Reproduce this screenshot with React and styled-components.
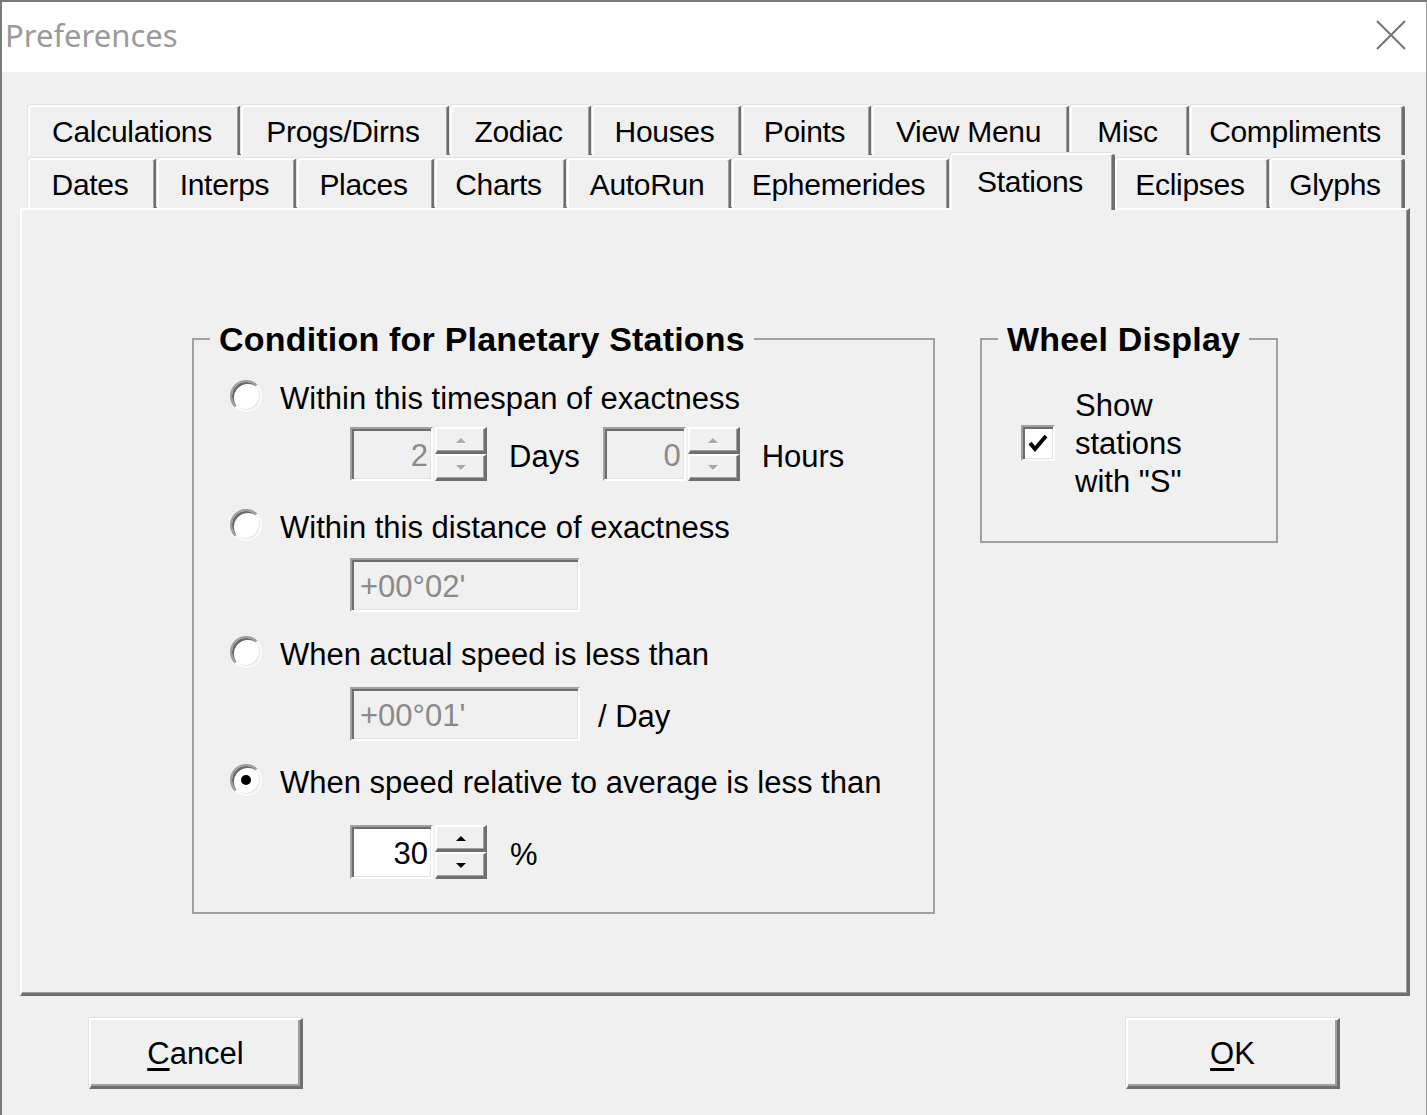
import React from "react"
import styled, { createGlobalStyle } from "styled-components"

const GlobalStyle = createGlobalStyle`
  html, body {
    margin: 0;
    padding: 0;
    background: #f0f0f0;
  }
  body {
    font-family: "Liberation Sans", Arial, sans-serif;
    color: #000;
  }
`

const Window = styled.div`
  box-sizing: border-box;
  width: 1427px;
  height: 1115px;
  display: flex;
  flex-direction: column;
  border-top: 2px solid #7a7a7a;
  border-left: 2px solid #7a7a7a;
  border-right: 1px solid #9a9a9a;
  background: #f0f0f0;
  overflow: hidden;
`

const TitleBar = styled.div`
  height: 70px;
  flex-shrink: 0;
  box-sizing: border-box;
  background: #fff;
  display: flex;
  align-items: center;
  justify-content: space-between;
  padding: 0 20px 4px 3px;
`

const Title = styled.span`
  font-family: "Noto Sans", "Liberation Sans", sans-serif;
  font-size: 31px;
  color: #9a9a9a;
`

const CloseButton = styled.div`
  width: 30px;
  height: 30px;
  display: flex;
`

const Client = styled.div`
  flex: 1;
  display: flex;
  flex-direction: column;
  padding: 33px 16px 0 18px;
`

const TabStrip = styled.div`
  margin-left: 8px;
  display: flex;
  flex-direction: column;
`

const TabRow = styled.div`
  display: flex;
  align-items: flex-end;
  height: ${p => p.$height}px;
  margin-top: ${p => p.$offset || 0}px;
`

const Tab = styled.div`
  box-sizing: border-box;
  flex-shrink: 0;
  width: ${p => p.$width}px;
  height: ${p => (p.$selected ? 57 : 50)}px;
  margin-bottom: ${p => (p.$selected ? -2 : 0)}px;
  position: relative;
  z-index: ${p => (p.$selected ? 2 : 1)};
  display: flex;
  align-items: center;
  justify-content: center;
  padding: 2px 4px ${p => (p.$selected ? 4 : 0)}px 0;
  background: #f0f0f0;
  border-top: 2px solid #fff;
  border-left: 2px solid #fff;
  border-right: 3px solid #6e6e6e;
  border-top-left-radius: 4px;
  border-top-right-radius: 4px;
  box-shadow: inset -1px 0 0 #a0a0a0, -1px -1px 0 #e3e3e3;
  font-size: 30px;
  letter-spacing: -0.3px;
  white-space: nowrap;
`

const Panel = styled.div`
  box-sizing: border-box;
  height: 788px;
  display: flex;
  align-items: flex-start;
  gap: 45px;
  padding: 110px 0 0 170px;
  border-top: 2px solid #fff;
  border-left: 2px solid #fff;
  border-right: 3px solid #6e6e6e;
  border-bottom: 3px solid #6e6e6e;
  box-shadow: inset -1px -1px 0 #a0a0a0;
`

const GroupBox = styled.fieldset`
  box-sizing: border-box;
  width: ${p => p.$width}px;
  min-inline-size: auto;
  margin: 0;
  padding: ${p => p.$padTop}px 0 ${p => p.$padBottom}px 16px;
  border: 2px solid #a0a0a0;
  display: flex;
  flex-direction: column;
  align-items: flex-start;
`

const Legend = styled.legend`
  padding: 0 9px;
  font-size: 34px;
  line-height: 38px;
  font-weight: bold;
  letter-spacing: 0.2px;
`

const RadioRow = styled.label`
  height: 40px;
  margin: ${p => p.$top}px 0 0 20px;
  display: flex;
  align-items: center;
  gap: 18px;
  font-size: 31px;
  white-space: nowrap;
`

const RadioText = styled.span`
  padding-top: 5px;
`

const Radio = styled.span`
  box-sizing: border-box;
  width: 32px;
  height: 32px;
  flex-shrink: 0;
  border-radius: 50%;
  background: #fff;
  border: 2px solid;
  border-color: #9c9c9c #fafafa #fafafa #9c9c9c;
  box-shadow: inset 2px 2px 0 #6a6a6a, inset -1px -1px 0 #e3e3e3;
  display: flex;
  align-items: center;
  justify-content: center;

  &::after {
    content: "";
    width: 10px;
    height: 10px;
    border-radius: 50%;
    background: ${p => (p.$checked ? "#000" : "transparent")};
  }
`

const FieldRow = styled.div`
  margin: ${p => p.$top}px 0 0 140px;
  display: flex;
  align-items: center;
  font-size: 31px;
  white-space: nowrap;
`

const Edit = styled.div`
  box-sizing: border-box;
  width: ${p => p.$width}px;
  height: ${p => p.$height || 54}px;
  display: flex;
  align-items: center;
  justify-content: ${p => (p.$right ? "flex-end" : "flex-start")};
  padding: 4px ${p => (p.$right ? 3 : 0)}px 0 ${p => (p.$right ? 0 : 8)}px;
  background: ${p => (p.$disabled ? "#f0f0f0" : "#fff")};
  color: ${p => (p.$disabled ? "#8a8a8a" : "#000")};
  border: 2px solid;
  border-color: #a0a0a0 #fff #fff #a0a0a0;
  box-shadow: inset 2px 2px 0 #6d6d6d, inset -1px -1px 0 #e3e3e3;
  font-size: 31px;
`

const SpinButtons = styled.div`
  width: 52px;
  margin-left: 2px;
  display: flex;
  flex-direction: column;
`

const SpinButton = styled.div`
  box-sizing: border-box;
  height: ${p => p.$height}px;
  display: flex;
  align-items: center;
  justify-content: center;
  background: #f0f0f0;
  border-top: 2px solid #fff;
  border-left: 2px solid #fff;
  border-right: 3px solid #6e6e6e;
  border-bottom: 3px solid #6e6e6e;
  box-shadow: inset -1px -1px 0 #a0a0a0;
`

const Arrow = styled.span`
  width: 0;
  height: 0;
  border-left: 5px solid transparent;
  border-right: 5px solid transparent;
  ${p =>
    p.$down
      ? `border-top: 5px solid ${p.$disabled ? "#a8a8a8" : "#000"};`
      : `border-bottom: 5px solid ${p.$disabled ? "#a8a8a8" : "#000"};`}
  filter: ${p => (p.$disabled ? "drop-shadow(1px 1px 0 #fff)" : "none")};
`

const Unit = styled.span`
  padding-top: 5px;
  margin: 0 ${p => p.$right || 0}px 0 ${p => p.$left}px;
`

const CheckRow = styled.label`
  margin-left: 23px;
  display: flex;
  align-items: center;
  gap: 20px;
`

const CheckBox = styled.span`
  box-sizing: border-box;
  width: 34px;
  height: 36px;
  flex-shrink: 0;
  display: flex;
  align-items: center;
  justify-content: center;
  background: #fff;
  border: 2px solid;
  border-color: #a0a0a0 #fafafa #fafafa #a0a0a0;
  box-shadow: inset 2px 2px 0 #6d6d6d, inset -1px -1px 0 #e3e3e3;
`

const CheckText = styled.span`
  font-size: 31px;
  line-height: 38px;
  padding-top: 2px;
`

const Footer = styled.div`
  margin-top: 22px;
  display: flex;
  justify-content: space-between;
  padding: 0 70px 0 69px;
`

const Button = styled.button`
  box-sizing: border-box;
  width: 214px;
  height: 71px;
  padding: 2px 0 0;
  background: #f0f0f0;
  border-top: 2px solid #fff;
  border-left: 2px solid #fff;
  border-right: 3px solid #6e6e6e;
  border-bottom: 3px solid #6e6e6e;
  box-shadow: inset -2px -2px 0 #a0a0a0, -1px -1px 0 #e3e3e3;
  font-family: "Liberation Sans", Arial, sans-serif;
  font-size: 31px;
  color: #000;
`

const Mnemonic = styled.span`
  text-decoration: underline;
  text-underline-offset: 4px;
`

const topTabs = [
  ["Calculations", 213],
  ["Progs/Dirns", 209],
  ["Zodiac", 142],
  ["Houses", 150],
  ["Points", 130],
  ["View Menu", 198],
  ["Misc", 120],
  ["Compliments", 215],
]

const bottomTabs = [
  ["Dates", 129],
  ["Interps", 140],
  ["Places", 138],
  ["Charts", 132],
  ["AutoRun", 165],
  ["Ephemerides", 218],
  ["Stations", 165],
  ["Eclipses", 155],
  ["Glyphs", 135],
]

function Spin({ value, disabled }) {
  return (
    <>
      <Edit $width={83} $right $disabled={disabled}>{value}</Edit>
      <SpinButtons>
        <SpinButton $height={27}>
          <Arrow $disabled={disabled} />
        </SpinButton>
        <SpinButton $height={27}>
          <Arrow $down $disabled={disabled} />
        </SpinButton>
      </SpinButtons>
    </>
  )
}

export default function App() {
  return (
    <>
      <GlobalStyle />
      <Window>
        <TitleBar>
          <Title>Preferences</Title>
          <CloseButton>
            <svg width="30" height="30" viewBox="0 0 30 30">
              <path d="M1 1 L29 29 M29 1 L1 29" stroke="#747474" strokeWidth="2" fill="none" />
            </svg>
          </CloseButton>
        </TitleBar>

        <Client>
          <TabStrip>
            <TabRow $height={50}>
              {topTabs.map(([name, width]) => (
                <Tab key={name} $width={width}>{name}</Tab>
              ))}
            </TabRow>
            <TabRow $height={55} $offset={-2}>
              {bottomTabs.map(([name, width]) => (
                <Tab key={name} $width={width} $selected={name === "Stations"}>
                  {name}
                </Tab>
              ))}
            </TabRow>
          </TabStrip>

          <Panel>
            <GroupBox $width={743} $padTop={18} $padBottom={33}>
              <Legend>Condition for Planetary Stations</Legend>

              <RadioRow $top={0}>
                <Radio />
                <RadioText>Within this timespan of exactness</RadioText>
              </RadioRow>
              <FieldRow $top={11}>
                <Spin value="2" disabled />
                <Unit $left={22} $right={23}>Days</Unit>
                <Spin value="0" disabled />
                <Unit $left={22}>Hours</Unit>
              </FieldRow>

              <RadioRow $top={24}>
                <Radio />
                <RadioText>Within this distance of exactness</RadioText>
              </RadioRow>
              <FieldRow $top={13}>
                <Edit $width={230} $disabled>+00°02'</Edit>
              </FieldRow>

              <RadioRow $top={20}>
                <Radio />
                <RadioText>When actual speed is less than</RadioText>
              </RadioRow>
              <FieldRow $top={15}>
                <Edit $width={230} $disabled>+00°01'</Edit>
                <Unit $left={18}>/ Day</Unit>
              </FieldRow>

              <RadioRow $top={19}>
                <Radio $checked />
                <RadioText>When speed relative to average is less than</RadioText>
              </RadioRow>
              <FieldRow $top={25}>
                <Spin value="30" />
                <Unit $left={23}>%</Unit>
              </FieldRow>
            </GroupBox>

            <GroupBox $width={298} $padTop={27} $padBottom={40}>
              <Legend>Wheel Display</Legend>
              <CheckRow>
                <CheckBox>
                  <svg width="22" height="22" viewBox="0 0 22 22">
                    <path d="M3 11 L8 17 L19 4" stroke="#000" strokeWidth="4" fill="none" />
                  </svg>
                </CheckBox>
                <CheckText>
                  Show
                  <br />
                  stations
                  <br />
                  with "S"
                </CheckText>
              </CheckRow>
            </GroupBox>
          </Panel>

          <Footer>
            <Button>
              <Mnemonic>C</Mnemonic>ancel
            </Button>
            <Button>
              <Mnemonic>O</Mnemonic>K
            </Button>
          </Footer>
        </Client>
      </Window>
    </>
  )
}
